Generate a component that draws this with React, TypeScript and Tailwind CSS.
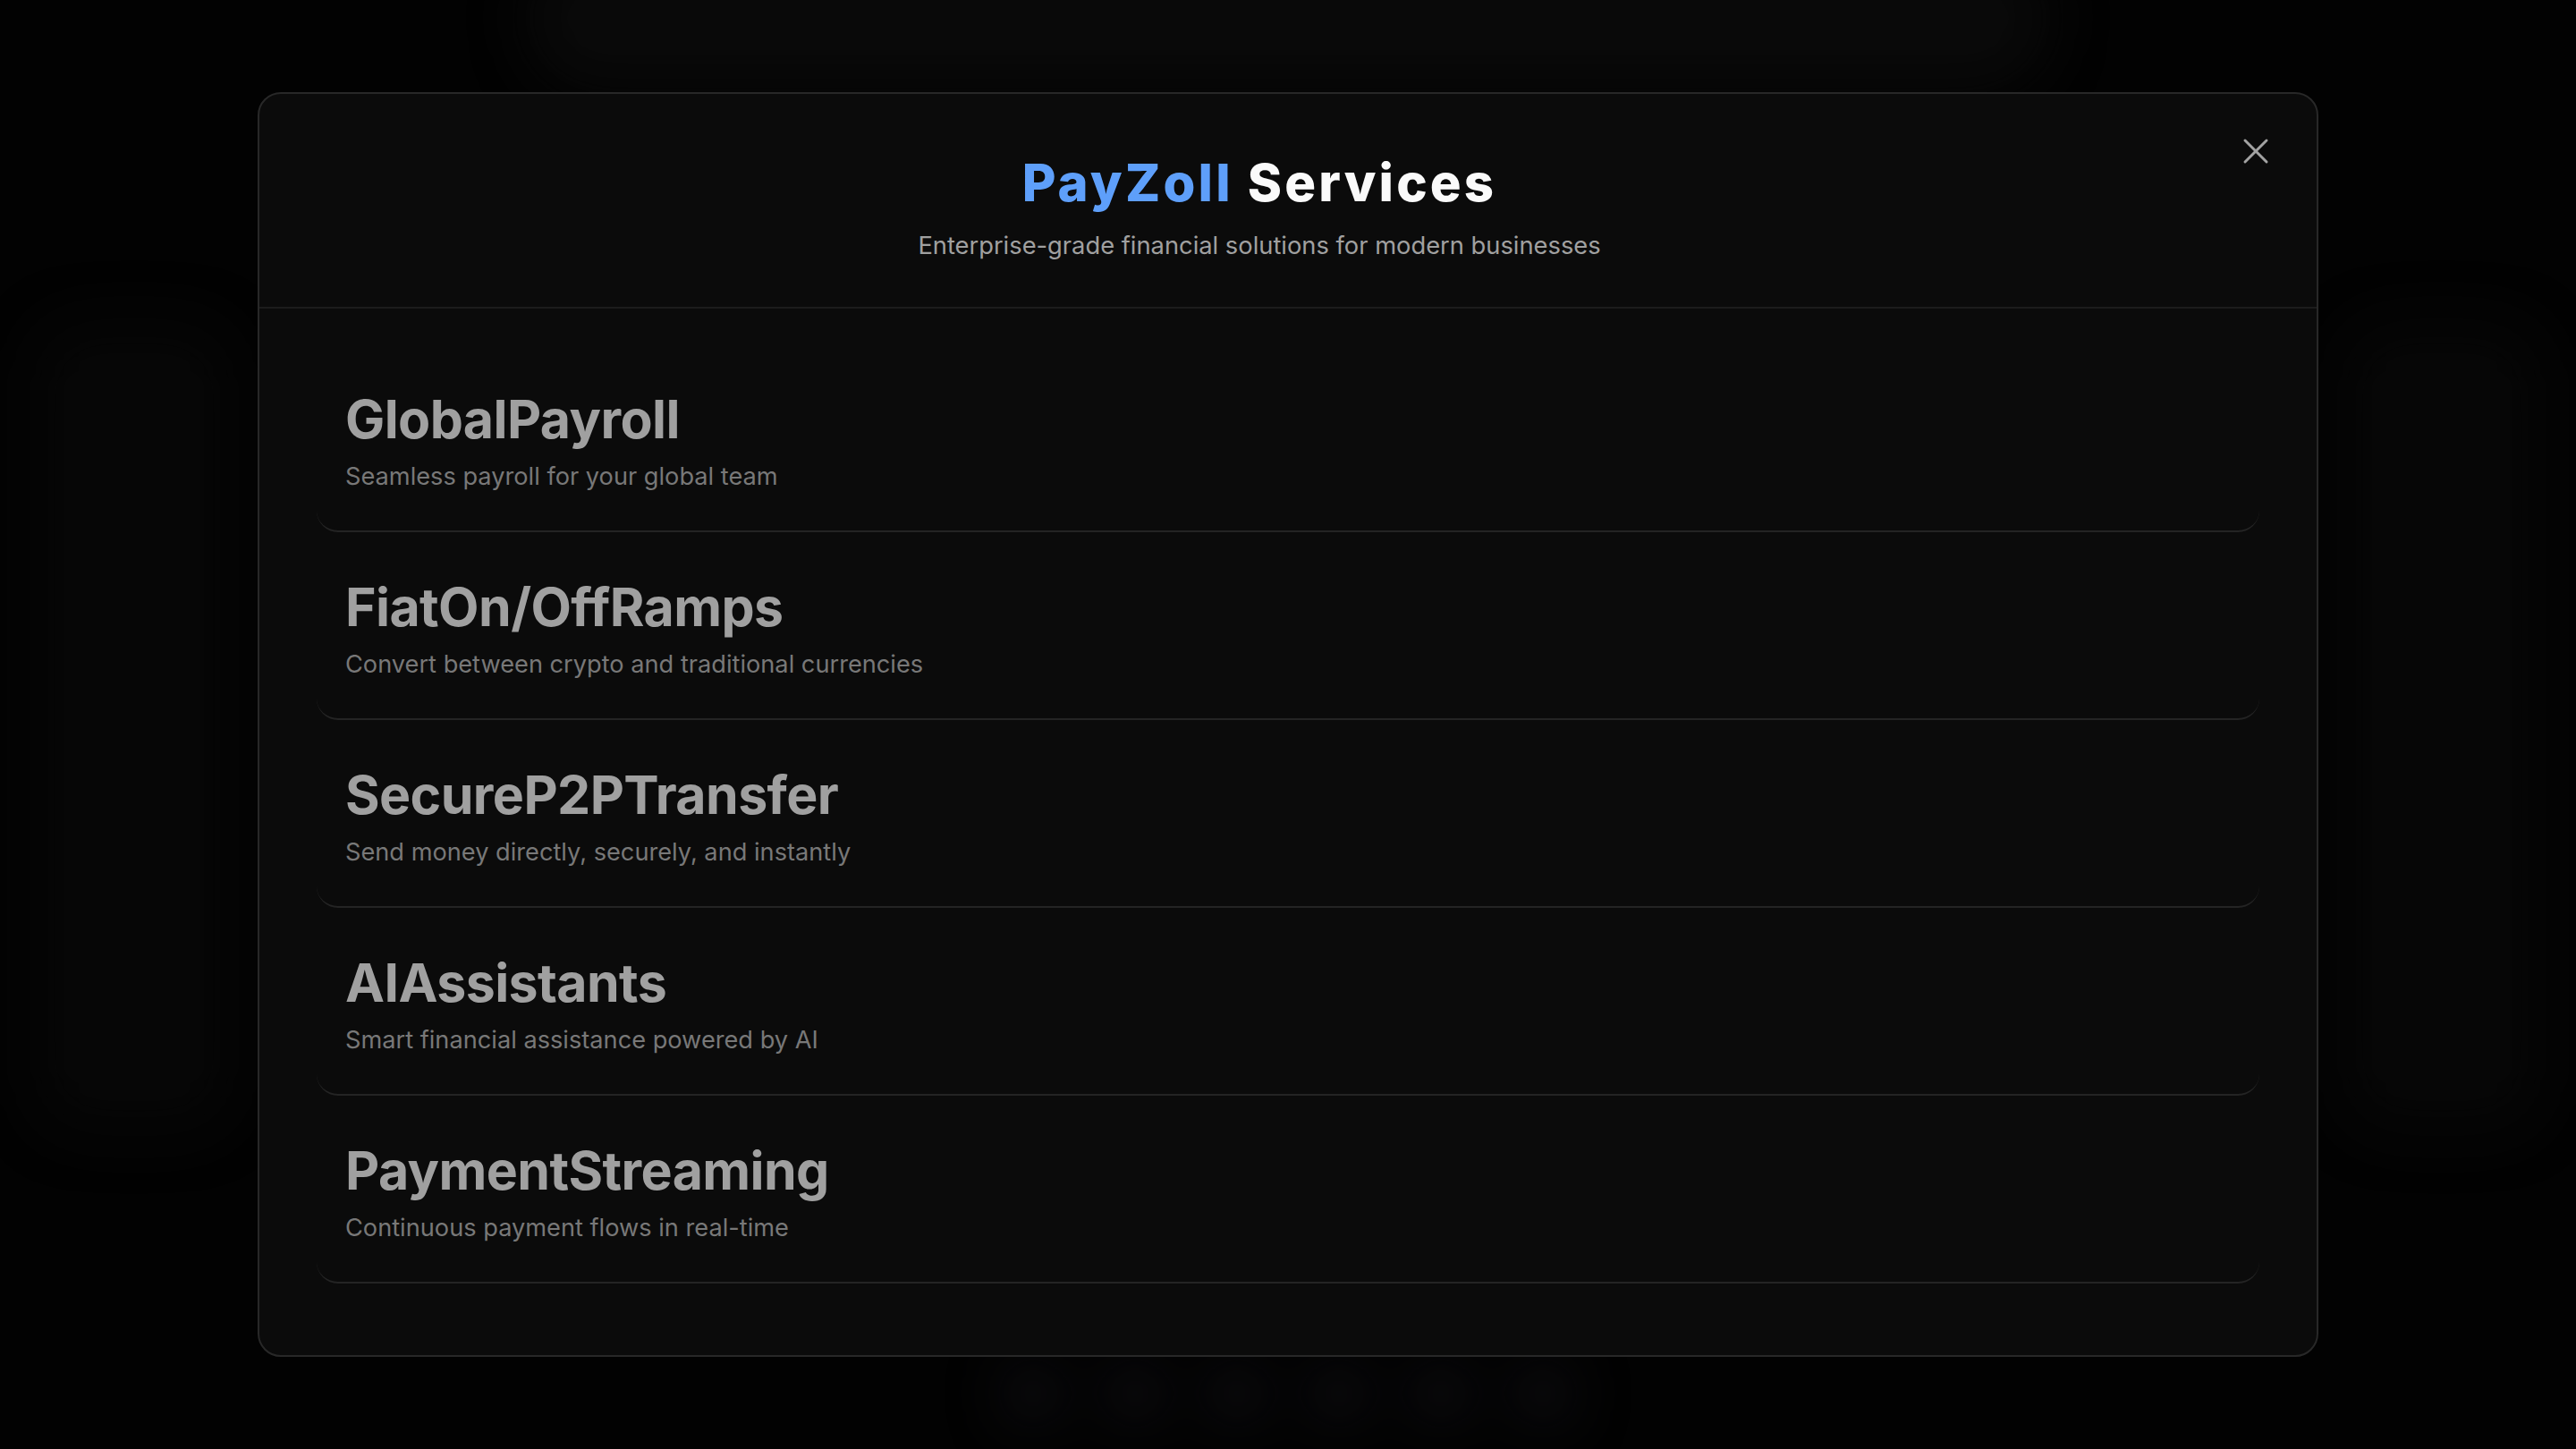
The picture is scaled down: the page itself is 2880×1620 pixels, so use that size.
import { X } from "lucide-react";

const services = [
  { title: "GlobalPayroll", desc: "Seamless payroll for your global team" },
  { title: "FiatOn/OffRamps", desc: "Convert between crypto and traditional currencies" },
  { title: "SecureP2PTransfer", desc: "Send money directly, securely, and instantly" },
  { title: "AIAssistants", desc: "Smart financial assistance powered by AI" },
  { title: "PaymentStreaming", desc: "Continuous payment flows in real-time" },
];

const dock = [0, 1, 2, 3, 4, 5];

export default function App() {
  return (
    <div className="relative h-[1620px] w-[2880px] overflow-hidden bg-[#040404] font-['Inter','Noto_Sans',sans-serif]">
      {/* blurred page behind the overlay */}
      <div className="flex h-full flex-col justify-between blur-[30px]">
        <div className="mx-auto mt-[-60px] h-[160px] w-[1700px] rounded-full bg-[#101010]" />
        <div className="flex justify-between px-[40px]">
          <div className="h-[900px] w-[220px] rounded-[60px] bg-[#0b0b0b]" />
          <div className="h-[900px] w-[220px] rounded-[60px] bg-[#0b0b0b]" />
        </div>
        <div className="mb-[30px] flex justify-center gap-[50px]">
          {dock.map((i) => (
            <div key={i} className="h-[64px] w-[64px] rounded-full bg-[#17161c]" />
          ))}
        </div>
      </div>

      {/* overlay */}
      <div className="absolute inset-0 flex items-center justify-center bg-black/40">
        <div className="relative w-[2304px] rounded-[26px] border-2 border-[#282828] bg-[#0b0b0b]">
          <button className="absolute right-[44px] top-[40px] text-[#a3a3a3]">
            <X size={48} strokeWidth={1.5} />
          </button>

          <div className="flex flex-col items-center border-b-2 border-[#1c1c1c] pb-[48px] pl-[64px] pr-[128px] pt-[64px]">
            <h1 className="text-[58px] font-extrabold leading-[70px] tracking-[0.055em]">
              <span className="text-[#5e9ffa]">PayZoll</span>{" "}
              <span className="text-[#fafafa]">Services</span>
            </h1>
            <p className="mt-[16px] text-[27.3px] leading-[40px] text-[#a0a0a0]">
              Enterprise-grade financial solutions for modern businesses
            </p>
          </div>

          <div className="flex flex-col px-[64px] pb-[80px] pt-[40px]">
            {services.map((s) => (
              <div
                key={s.title}
                className="rounded-[24px] border-b-2 border-[#242424] px-[32px] pb-[40px] pt-[48px]"
              >
                <h2 className="text-[59px] font-bold leading-[72px] tracking-[-0.01em] text-[#a0a0a0]">
                  {s.title}
                </h2>
                <p className="mt-[8px] text-[27.2px] leading-[40px] text-[#787878]">{s.desc}</p>
              </div>
            ))}
          </div>
        </div>
      </div>
    </div>
  );
}
